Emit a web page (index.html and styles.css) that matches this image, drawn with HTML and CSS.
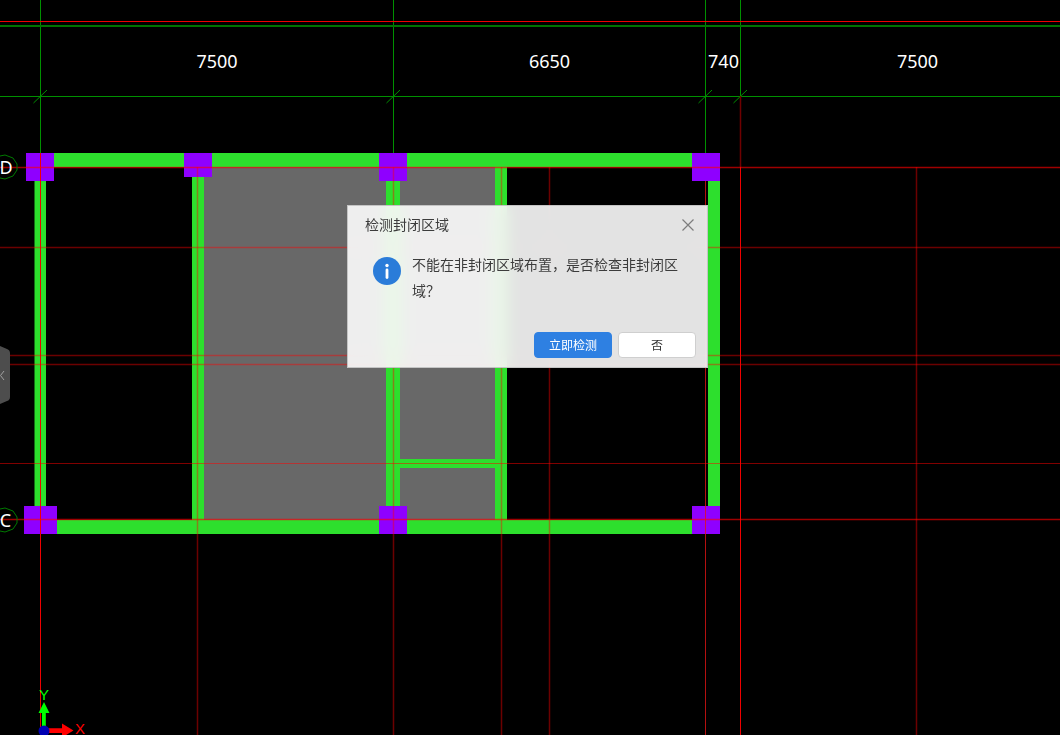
FILE: index.html
```html
<!DOCTYPE html>
<html lang="zh">
<head>
<meta charset="utf-8">
<title>检测封闭区域</title>
<link rel="stylesheet" href="styles.css">
</head>
<body>
<main class="viewport">
  <svg class="canvas" width="1060" height="735" viewBox="0 0 1060 735">
    <!-- floor fill -->
    <g class="floor">
      <rect x="204" y="167" width="182" height="353"/>
      <rect x="400" y="167" width="95" height="292"/>
      <rect x="400" y="468" width="95" height="52"/>
    </g>
    <!-- walls / beams -->
    <g class="wall">
      <rect x="54" y="153" width="638" height="14"/>
      <rect x="57" y="520" width="635" height="14"/>
      <rect x="34.5" y="167" width="11.5" height="353"/>
      <rect x="192" y="167" width="12" height="353"/>
      <rect x="386" y="167" width="14" height="353"/>
      <rect x="495" y="167" width="12" height="353"/>
      <rect x="708" y="167" width="12" height="339"/>
      <rect x="400" y="459" width="95" height="9"/>
    </g>
    <!-- columns -->
    <g class="col">
      <rect x="26" y="153" width="28" height="28"/>
      <rect x="184" y="153" width="28" height="24"/>
      <rect x="379" y="153" width="28" height="28"/>
      <rect x="692" y="153" width="28" height="28"/>
      <rect x="24" y="506" width="33" height="28"/>
      <rect x="379" y="506" width="28" height="28"/>
      <rect x="692" y="506" width="28" height="28"/>
    </g>
    <!-- green axis / dimension lines -->
    <g class="dim">
      <path d="M40.5 0V153M393.5 0V153M705.5 0V153M740.5 0V96"/>
      <path d="M0 96.5H1060"/>
      <path class="dim-thick" d="M0 26H1060"/>
      <path d="M33.5 103L47 90M386.5 103L400 90M698.5 103L712 90M733.5 103L747 90"/>
    </g>
    <!-- red grid lines -->
    <g class="grid-dim">
      <path class="grid-wide" d="M197.5 167V735M393.500 167V735M501.5 167V735M549.5 167V735M916.5 167V735"/>
      <path class="grid-wide" d="M10 355.5H1060M10 364.5H1060M0 247.5H1060"/>
      <path d="M0 463.5H1060"/>
      <path class="grid-solid-dark" d="M740.5 96V167"/>
    </g>
    <g class="grid-red">
      <path d="M40.5 153V735M740.5 167V735"/>
      <path d="M0 21.5H1060"/>
      <path class="grid-soft" d="M0 167.5H1060M0 519.5H1060"/>
      <path class="grid-side" d="M705.5 181V735"/>
    </g>
    <!-- axis bubbles -->
    <g class="bubble">
      <path d="M0 156L5 155L13 158L17 164L17 170L13 176L5 179L0 178"/>
      <path d="M0 509L5 508L13 511L17 517L17 523L13 529L5 532L0 531"/>
    </g>
    <g class="cad-text">
      <text x="6" y="173.500" text-anchor="middle">D</text>
      <text x="5.500" y="526.500" text-anchor="middle">C</text>
      <text x="217" y="67.500" text-anchor="middle">7500</text>
      <text x="549.500" y="67.500" text-anchor="middle">6650</text>
      <text x="723.500" y="67.500" text-anchor="middle">740</text>
      <text x="917.500" y="67.500" text-anchor="middle">7500</text>
    </g>
    <!-- UCS icon -->
    <g>
      <path class="ucs-y" d="M44 702L49.500 713H45.800V730H42V713H38.500Z"/>
      <path class="ucs-x" d="M48 728.200H62V723.500L73.500 730.500L62 737.500V733H48Z"/>
      <circle class="ucs-o" cx="44" cy="731" r="5.500"/>
      <text class="ucs-label-y" x="44" y="700" text-anchor="middle">Y</text>
      <text class="ucs-label-x" x="80" y="734" text-anchor="middle">X</text>
    </g>
    <!-- side handle -->
    <path class="handle" d="M0 346L7 349Q10 350 10 353V397Q10 400 7 401L0 404Z"/>
    <path class="handle-chevron" d="M4 371L0.500 375.500L4 380"/>
  </svg>

  <section class="dialog" role="dialog">
    <header class="dialog-head">
      <h1 class="dialog-title">检测封闭区域</h1>
      <svg class="dialog-close" width="12" height="12" viewBox="0 0 12 12"><path d="M0.500 0.500L11.500 11.500M11.500 0.500L0.500 11.500"/></svg>
    </header>
    <div class="dialog-body">
      <svg class="info-icon" width="28" height="28" viewBox="0 0 28 28">
        <circle class="info-bg" cx="14" cy="14" r="14"/>
        <circle class="info-fg" cx="14" cy="8.500" r="1.700"/>
        <rect class="info-fg" x="12.600" y="11.500" width="2.800" height="10.500" rx="1.400"/>
      </svg>
      <p class="dialog-msg">不能在非封闭区域布置，是否检查非封闭区域？</p>
    </div>
    <footer class="dialog-foot">
      <button class="btn btn-primary" type="button">立即检测</button>
      <button class="btn btn-default" type="button">否</button>
    </footer>
  </section>
</main>
</body>
</html>
```
FILE: styles.css
```css
html, body {
  margin: 0;
  padding: 0;
  background: #000;
  overflow: hidden;
}
.viewport {
  position: relative;
  width: 1060px;
  height: 735px;
  overflow: hidden;
  font-family: "Noto Sans CJK SC", "Noto Sans", sans-serif;
}
.canvas { display: block; }

.floor rect { fill: #686868; }
.wall rect { fill: #2ddf2d; }
.col rect { fill: #8f00ff; }

.dim path { fill: none; stroke: #009000; stroke-width: 1; }
.dim .dim-thick { stroke-width: 2; stroke: #007400; }

.grid-dim path { fill: none; stroke: rgba(255, 0, 0, .5); stroke-width: 1; }
.grid-dim .grid-wide { stroke: rgba(255, 0, 0, .42); stroke-width: 1.500; }
.grid-dim .grid-solid-dark { stroke: #700000; stroke-width: 1.500; }
.grid-red path { fill: none; stroke: #f00000; stroke-width: 1; }
.grid-red .grid-soft { stroke: rgba(255, 0, 0, .62); stroke-width: 1.500; }
.grid-red .grid-side { stroke: rgba(225, 20, 20, .8); }

.bubble path { fill: none; stroke: #007a00; stroke-width: 1; }
.cad-text text {
  fill: #fff;
  font-family: "Noto Sans", sans-serif;
  font-size: 18px;
}

.ucs-y { fill: #00ff00; }
.ucs-x { fill: #ff0000; }
.ucs-o { fill: #0000b4; }
.ucs-label-y, .ucs-label-x {
  font-family: "Liberation Sans", sans-serif;
  font-size: 15px;
}
.ucs-label-y { fill: #00ff00; }
.ucs-label-x { fill: #ff0000; }

.handle { fill: #4d4d4d; }
.handle-chevron { fill: none; stroke: #a0a0a0; stroke-width: 1; }

.dialog {
  position: absolute;
  left: 347px;
  top: 205px;
  box-sizing: border-box;
  width: 361px;
  height: 163px;
  display: flex;
  flex-direction: column;
  border: 1px solid #c4c4c4;
  background: rgba(255, 255, 255, .89);
  -webkit-backdrop-filter: blur(8px);
  backdrop-filter: blur(8px);
}
.dialog-head {
  display: flex;
  align-items: center;
  justify-content: space-between;
  height: 38px;
  padding: 0 13px 0 17px;
}
.dialog-title {
  margin: -2px 0 0;
  font-size: 14px;
  font-weight: 400;
  line-height: 20px;
  color: #3c3c3c;
}
.dialog-close path { fill: none; stroke: #7d7d7d; stroke-width: 1.200; }

.dialog-body {
  display: flex;
  align-items: flex-start;
  gap: 11px;
  padding: 7px 28px 0 25px;
  flex: 1;
}
.info-icon { flex: none; margin-top: 6px; }
.info-bg { fill: #2a7cd9; }
.info-fg { fill: #fff; }
.dialog-msg {
  margin: 0;
  font-size: 14px;
  line-height: 26px;
  color: #3c3c3c;
}
.dialog-foot {
  display: flex;
  justify-content: flex-end;
  gap: 6px;
  padding: 0 11px 9px 0;
}
.btn {
  box-sizing: border-box;
  width: 78px;
  height: 26px;
  padding: 0;
  border-radius: 4px;
  font-family: inherit;
  font-size: 12px;
  line-height: 24px;
}
.btn-primary {
  border: 1px solid #2e80e2;
  background: #2e80e2;
  color: #fff;
}
.btn-default {
  border: 1px solid #cfcfcf;
  background: #fff;
  color: #333;
}
```
